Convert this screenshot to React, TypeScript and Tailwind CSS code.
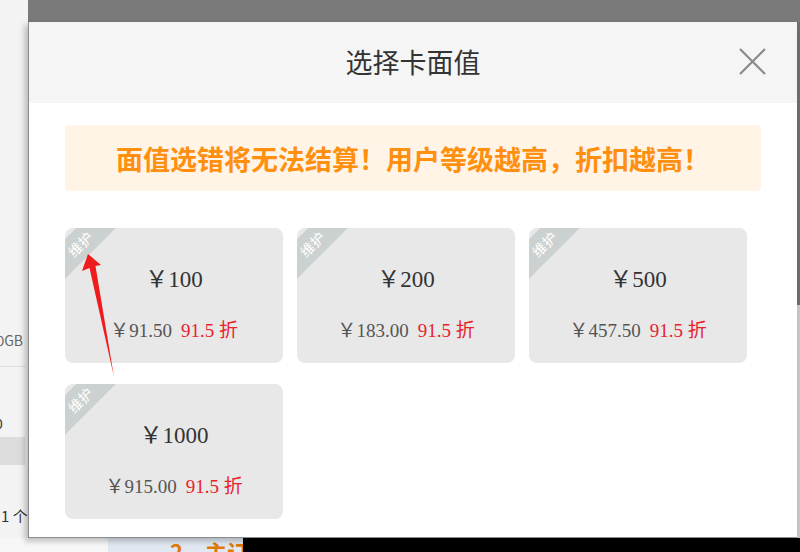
import React from "react";

const cards = [
  { face: "100", pay: "91.50" },
  { face: "200", pay: "183.00" },
  { face: "500", pay: "457.50" },
  { face: "1000", pay: "915.00" },
];

const cjk = "font-['Noto_Sans_CJK_SC','Noto_Sans',sans-serif]";
const serif = "font-['Liberation_Serif','Noto_Sans_CJK_SC',serif]";

function Card({ face, pay }: { face: string; pay: string }) {
  return (
    <div className="relative w-[218px] h-[135px] rounded-[8px] bg-[#e8e8e8] overflow-hidden flex flex-col items-center">
      <div className={`absolute left-[-45px] top-[2px] w-[120px] h-[28px] -rotate-45 bg-[#cbd1d0] flex items-center justify-center text-white text-[14px] leading-none ${cjk}`}>
        维护
      </div>
      <div className={`mt-[37px] leading-[30px] text-[23px] text-[#333] ${serif}`}>
        ￥{face}
      </div>
      <div className={`mt-[24px] leading-[24px] text-[19px] flex gap-[9px] ${serif}`}>
        <span className="text-[#555]">￥{pay}</span>
        <span className="text-[#e8232c]">91.5 折</span>
      </div>
    </div>
  );
}

export default function App() {
  return (
    <div className={`relative w-[800px] h-[552px] overflow-hidden flex flex-col bg-white ${cjk}`}>
      <div className="flex h-[538px]">
        {/* left background strip */}
        <div className="w-[28px] h-full bg-[#f3f3f3] flex flex-col overflow-hidden text-[14px]">
          <div className="mt-[330px] leading-[20px] h-[20px] flex justify-end pr-[5px] text-[#666] whitespace-nowrap">
            00GB
          </div>
          <div className="mt-[16px] h-px w-[26px] bg-[#dddddd]" />
          <div className="mt-[46px] leading-[20px] h-[20px] -ml-[5px] text-[#333]">0</div>
          <div className="mt-[4px] h-[28px] w-[25px] bg-[#dcdcdc]" />
          <div className="mt-[41px] leading-[20px] h-[20px] pl-[1px] text-[15px] text-[#333] whitespace-nowrap">
            1 个
          </div>
        </div>
        {/* right column */}
        <div className="flex-1 flex flex-col">
          <div className="h-[22px] bg-[#7a7a7a]" />
          <div className="flex flex-1">
            <div className="relative z-10 flex-1 flex flex-col bg-white border-l border-b border-[#8c8c8c] shadow-[-3px_3px_6px_rgba(0,0,0,0.25)]">
              <div className="relative h-[81px] bg-[#f5f5f5] flex items-center justify-center pb-[3px]">
                <span className="text-[27px] text-[#333] leading-none">选择卡面值</span>
                <svg
                  className="absolute right-[31px] top-[26px]"
                  width="27"
                  height="27"
                  viewBox="0 0 27 27"
                >
                  <path d="M1 1L26 26M26 1L1 26" stroke="#8a8a8a" strokeWidth="2.2" fill="none" />
                </svg>
              </div>
              <div className="px-[36px] pt-[22px]">
                <div className="h-[66px] rounded-[4px] bg-[#fff4e6] flex items-center justify-center">
                  <span className="text-[27px] font-bold text-[#ff8f0f] leading-none">
                    面值选错将无法结算！用户等级越高，折扣越高！
                  </span>
                </div>
                <div className="mt-[37px] flex flex-wrap gap-x-[14px] gap-y-[21px]">
                  {cards.map((c) => (
                    <Card key={c.face} face={c.face} pay={c.pay} />
                  ))}
                </div>
              </div>
            </div>
            <div className="w-[3px] flex flex-col">
              <div className="h-[283px] bg-[#6e6e6e]" />
              <div className="flex-1 bg-[#c8c8c8]" />
            </div>
          </div>
        </div>
      </div>
      {/* bottom strip */}
      <div className="flex h-[14px]">
        <div className="w-[108px] bg-[#f7f7f7]" />
        <div className="w-[135px] bg-[#e1e8f1] overflow-hidden pl-[62px] pt-[2px]">
          <span className="block text-[22px] font-bold text-[#e07a05] leading-[22px] whitespace-nowrap">
            2、主订单
          </span>
        </div>
        <div className="flex-1 bg-black" />
      </div>
      {/* red annotation arrow */}
      <svg className="absolute z-20 left-0 top-0 pointer-events-none" width="800" height="552" viewBox="0 0 800 552">
        <polygon
          points="88,254 101,265 95.5,266 114,377 89.5,268 82,271"
          fill="#ee1c1c"
        />
      </svg>
    </div>
  );
}
